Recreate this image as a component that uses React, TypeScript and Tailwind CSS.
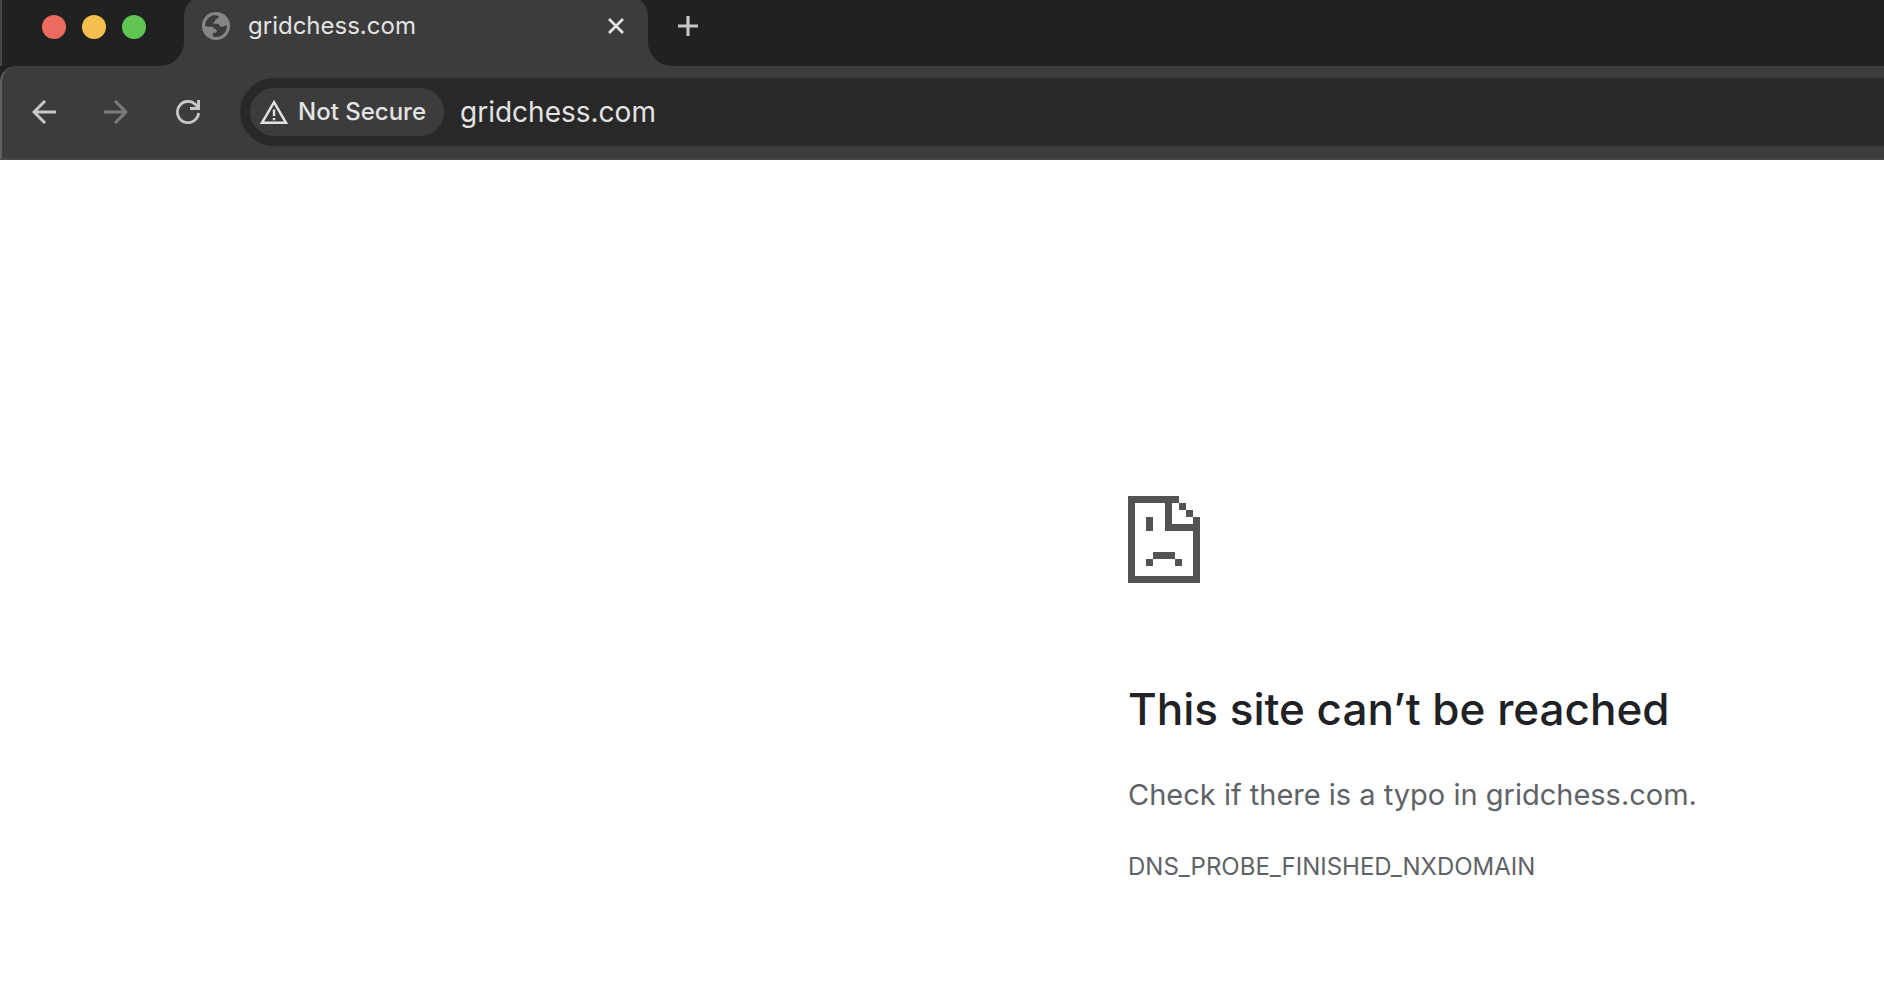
import type { ReactNode } from "react";

function GlobeIcon() {
  return (
    <svg viewBox="0 0 84 84" className="size-7 shrink-0" aria-hidden="true">
      <circle cx="42" cy="42" r="42" fill="#868686" />
      <path
        fill="#3c3c3c"
        d="M9 41C10 26 20 14 34 10C40 9 46 10 50 12C51 17 48 21 42 21C39 22 41 29 36 31C31 32 33 35 37 35H47C53 35 52 44 58 44C66 45 68 39 75 41C75 58 62 74 44 75C38 76 32 74 32 66C32 61 36 62 42 62C45 60 45 53 41 52C35 51 36 45 30 44C23 43 16 45 9 41Z"
      />
    </svg>
  );
}

function BackIcon() {
  return (
    <svg viewBox="0 0 24 24" className="size-6" fill="none" stroke="currentColor" strokeWidth="3" aria-hidden="true">
      <path d="M24 12H2M13 1L2 12L13 23" />
    </svg>
  );
}

function ReloadIcon() {
  return (
    <svg viewBox="0 0 24 24" className="size-6" fill="none" stroke="currentColor" strokeWidth="2.8" aria-hidden="true">
      <path d="M22.6 13A10.6 10.6 0 1 1 19.5 4.5L22.5 7.5" />
      <path d="M22.6 0V8.4H14" strokeWidth="3" />
    </svg>
  );
}

function WarningIcon() {
  return (
    <svg viewBox="0 0 28 24" className="h-6 w-7 shrink-0" fill="none" stroke="currentColor" strokeWidth="2.4" aria-hidden="true">
      <path d="M14 2.2L26 22.8H2Z" />
      <path d="M14 9.5V16M14 18V20.2" />
    </svg>
  );
}

// Dead page glyph, drawn on a pixel grid
function SadPageIcon() {
  return (
    <svg viewBox="0 0 216 261" className="h-[87px] w-[72px]" fill="#535353" shapeRendering="crispEdges" aria-hidden="true">
      <path d="M0 0H153V21H132V84H195V63H216V261H0ZM21 21V240H195V105H111V21Z" fillRule="evenodd" />
      <path d="M153 21H174V42H153ZM174 42H195V63H174Z" />
      <path d="M54 63H75V105H54ZM75 168H141V189H75ZM54 189H75V210H54ZM141 189H162V210H141Z" />
    </svg>
  );
}

function ToolbarButton({ label, disabled, children }: { label: string; disabled?: boolean; children: ReactNode }) {
  return (
    <button
      type="button"
      aria-label={label}
      disabled={disabled}
      className="flex size-12 items-center justify-center rounded-full text-[#c7c7c7] disabled:text-[#7b7b7b]"
    >
      {children}
    </button>
  );
}

function TabStrip() {
  return (
    <div className="flex h-[66px] bg-[#3c3c3c]">
      {/* Window controls */}
      <div className="flex w-[184px] shrink-0 gap-4 rounded-br-3xl border-l-2 border-[#464848] bg-[#202221] pt-[15px] pl-10">
        <button type="button" aria-label="Close window" className="size-6 rounded-full bg-[#ed6a5e]" />
        <button type="button" aria-label="Minimize window" className="size-6 rounded-full bg-[#f5bf4f]" />
        <button type="button" aria-label="Zoom window" className="size-6 rounded-full bg-[#61c554]" />
      </div>

      {/* Active tab */}
      <div className="w-[464px] shrink-0 overflow-hidden bg-linear-to-b from-[#202221] from-50% to-[#3c3c3c] to-50%">
        <div className="-mt-1 flex h-[70px] items-start rounded-t-[20px] bg-[#3c3c3c] pt-[10px] pr-4 pl-[18px]">
          <div className="flex h-10 flex-1 items-center gap-[18px]">
            <GlobeIcon />
            <span className="text-2xl text-[#e3e3e3]">gridchess.com</span>
          </div>
          <button type="button" aria-label="Close tab" className="flex h-10 w-8 items-center justify-center text-[#e3e3e3]">
            <svg viewBox="0 0 16 16" className="size-4" stroke="currentColor" strokeWidth="2.8" aria-hidden="true">
              <path d="M1 1L15 15M15 1L1 15" />
            </svg>
          </button>
        </div>
      </div>

      <div className="flex-1 rounded-bl-3xl bg-[#202221] pt-[6px] pl-5">
        <button type="button" aria-label="New tab" className="flex size-10 items-center justify-center text-[#c7c7c7]">
          <svg viewBox="0 0 20 20" className="size-5" stroke="currentColor" strokeWidth="3.2" aria-hidden="true">
            <path d="M10 0V20M0 10H20" />
          </svg>
        </button>
      </div>
    </div>
  );
}

function Toolbar() {
  return (
    <div className="bg-[#202221]">
      <div className="flex h-[94px] items-center rounded-tl-2xl border-b-2 border-l-2 border-b-[#494647] border-l-[#606060] bg-[#3c3c3c] pl-[18px]">
        <div className="flex gap-6">
          <ToolbarButton label="Back">
            <BackIcon />
          </ToolbarButton>
          <ToolbarButton label="Forward" disabled>
            <span className="rotate-180">
              <BackIcon />
            </span>
          </ToolbarButton>
          <ToolbarButton label="Reload">
            <ReloadIcon />
          </ToolbarButton>
        </div>

        {/* Address bar */}
        <div className="ml-7 flex h-[68px] flex-1 items-center rounded-l-full bg-[#282828] pl-[10px]">
          <button
            type="button"
            className="flex h-12 shrink-0 items-center gap-[10px] rounded-full bg-[#3c3c3c] pr-[18px] pl-[10px] text-2xl font-medium text-[#e3e3e3]"
          >
            <WarningIcon />
            Not Secure
          </button>
          <input
            type="text"
            aria-label="Address"
            defaultValue="gridchess.com"
            className="ml-4 h-12 min-w-0 flex-1 bg-transparent text-[28px] text-[#e3e3e3] outline-none"
          />
        </div>
      </div>
    </div>
  );
}

export default function App() {
  return (
    <div className="min-h-screen bg-white font-['Inter',sans-serif]">
      <header>
        <TabStrip />
        <Toolbar />
      </header>

      <main className="pt-[336px] pl-[1128px]">
        <SadPageIcon />
        <h1 className="mt-24 text-[44px] leading-[60px] font-medium text-[#202124]">This site can’t be reached</h1>
        <p className="mt-8 text-[29px] leading-[48px] text-[#5f6368]">Check if there is a typo in gridchess.com.</p>
        <p className="mt-8 text-2xl leading-8 text-[#5f6368]">DNS_PROBE_FINISHED_NXDOMAIN</p>
      </main>
    </div>
  );
}
